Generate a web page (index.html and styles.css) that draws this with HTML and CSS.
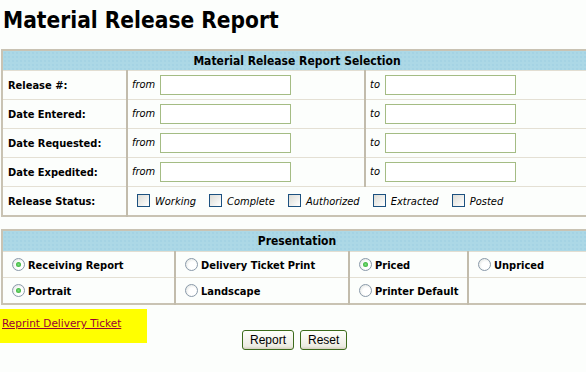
FILE: index.html
```html
<!DOCTYPE html>
<html lang="en">
<head>
  <meta charset="UTF-8">
  <title>Material Release Report</title>
  <link rel="stylesheet" href="styles.css">
</head>
<body>
  <h1>Material Release Report</h1>

  <table class="grid selection">
    <tr>
      <th colspan="3" class="band">Material Release Report Selection</th>
    </tr>
    <tr>
      <td class="label">Release #:</td>
      <td><span class="hint">from</span><input type="text"></td>
      <td><span class="hint">to</span><input type="text"></td>
    </tr>
    <tr>
      <td class="label">Date Entered:</td>
      <td><span class="hint">from</span><input type="text"></td>
      <td><span class="hint">to</span><input type="text"></td>
    </tr>
    <tr>
      <td class="label">Date Requested:</td>
      <td><span class="hint">from</span><input type="text"></td>
      <td><span class="hint">to</span><input type="text"></td>
    </tr>
    <tr>
      <td class="label">Date Expedited:</td>
      <td><span class="hint">from</span><input type="text"></td>
      <td><span class="hint">to</span><input type="text"></td>
    </tr>
    <tr>
      <td class="label">Release Status:</td>
      <td colspan="2" class="status">
        <label><span class="box"></span>Working</label>
        <label><span class="box"></span>Complete</label>
        <label><span class="box"></span>Authorized</label>
        <label><span class="box"></span>Extracted</label>
        <label><span class="box"></span>Posted</label>
      </td>
    </tr>
  </table>

  <table class="grid presentation">
    <tr>
      <th colspan="4" class="band">Presentation</th>
    </tr>
    <tr>
      <td class="p1"><span class="radio on"></span>Receiving Report</td>
      <td class="p2"><span class="radio"></span>Delivery Ticket Print</td>
      <td class="p3"><span class="radio on"></span>Priced</td>
      <td><span class="radio"></span>Unpriced</td>
    </tr>
    <tr>
      <td class="p1"><span class="radio on"></span>Portrait</td>
      <td class="p2"><span class="radio"></span>Landscape</td>
      <td class="p3"><span class="radio"></span>Printer Default</td>
      <td></td>
    </tr>
  </table>

  <div class="footer">
    <div class="reprint"><a href="#">Reprint Delivery Ticket</a></div>
    <div class="buttons">
      <button type="button">Report</button>
      <button type="button">Reset</button>
    </div>
  </div>
</body>
</html>
```

FILE: styles.css
```css
html {
  overflow: hidden;
}

body {
  margin: 0;
  padding: 0 0 0 1px;
  background-color: #fcfefc;
  font-family: "DejaVu Sans Condensed", "DejaVu Sans", sans-serif;
  font-size: 11px;
  color: #000;
}

h1 {
  margin: 5px 0 0 2px;
  font-size: 22.5px;
  line-height: 30px;
  font-weight: bold;
}

.grid {
  width: 592px;
  border-collapse: collapse;
  border: 2px solid #c9c3b3;
}

.selection {
  margin-top: 14px;
}

.presentation {
  margin-top: 12px;
}

.band {
  height: 19px;
  padding: 0;
  background-color: #acd8e6;
  background-image: radial-gradient(#9ccde0 0.6px, transparent 0.8px);
  background-size: 4px 4px;
  border-bottom: 1px solid #e2ded2;
  font-size: 12px;
  text-align: center;
}

.presentation .band {
  height: 20px;
}

.grid td {
  padding: 0 4px;
  border-top: 1px solid #e4e0d4;
  border-left: 2px solid #c2bcac;
}

.selection td {
  height: 28px;
}

.selection td.label {
  width: 114px;
  font-weight: bold;
  padding-left: 5px;
  border-left: none;
}

.selection td:nth-child(2) {
  width: 228px;
}

.hint {
  font-style: italic;
  display: inline-block;
  margin-right: 5px;
}

input[type="text"] {
  width: 131px;
  height: 20px;
  box-sizing: border-box;
  border: 1px solid #a4bc84;
  background: #fff;
  vertical-align: middle;
  margin: 0;
}

.status label {
  font-style: italic;
  margin-left: 0;
  margin-right: 10px;
}

.status label:first-child {
  margin-left: 5px;
}

.box {
  display: inline-block;
  width: 11px;
  height: 11px;
  border: 1px solid #1c5180;
  background: linear-gradient(135deg, #dcdcd6, #fff);
  vertical-align: -2px;
  margin-right: 5px;
}

.presentation td {
  height: 25px;
  font-weight: bold;
  padding-left: 9px;
}

.presentation td.p1 {
  width: 158px;
  border-left: none;
  padding-left: 9px;
}

.presentation td.p2 {
  width: 159px;
}

.presentation td.p3 {
  width: 104px;
}

.radio {
  display: inline-block;
  width: 11px;
  height: 11px;
  border: 1px solid #8a9aaa;
  border-radius: 50%;
  background: radial-gradient(circle at 60% 60%, #fff 40%, #d8dcd8);
  vertical-align: -2px;
  margin-right: 3px;
  position: relative;
}

.radio.on::after {
  content: "";
  position: absolute;
  left: 3px;
  top: 3px;
  width: 5px;
  height: 5px;
  border-radius: 50%;
  background: radial-gradient(#7ee07e, #21a121);
}

.footer {
  display: flex;
  align-items: flex-start;
  margin-top: 4px;
}

.reprint {
  width: 147px;
  height: 34px;
  margin-left: -1px;
  background-color: #ffff00;
  padding: 8px 0 0 2px;
  box-sizing: border-box;
}

.reprint a {
  color: #990033;
  font-family: "DejaVu Sans", sans-serif;
  font-size: 10.5px;
}

.buttons {
  display: flex;
  gap: 6px;
  margin: 21px 0 0 95px;
}

button {
  height: 20px;
  padding: 0 7px;
  font-family: "Liberation Sans", Arial, sans-serif;
  font-size: 12px;
  color: #000;
  border: 1px solid #3d6b1c;
  border-radius: 3px;
  background: linear-gradient(#fffffc, #ecebe2 85%, #d6d0c0);
}
```
